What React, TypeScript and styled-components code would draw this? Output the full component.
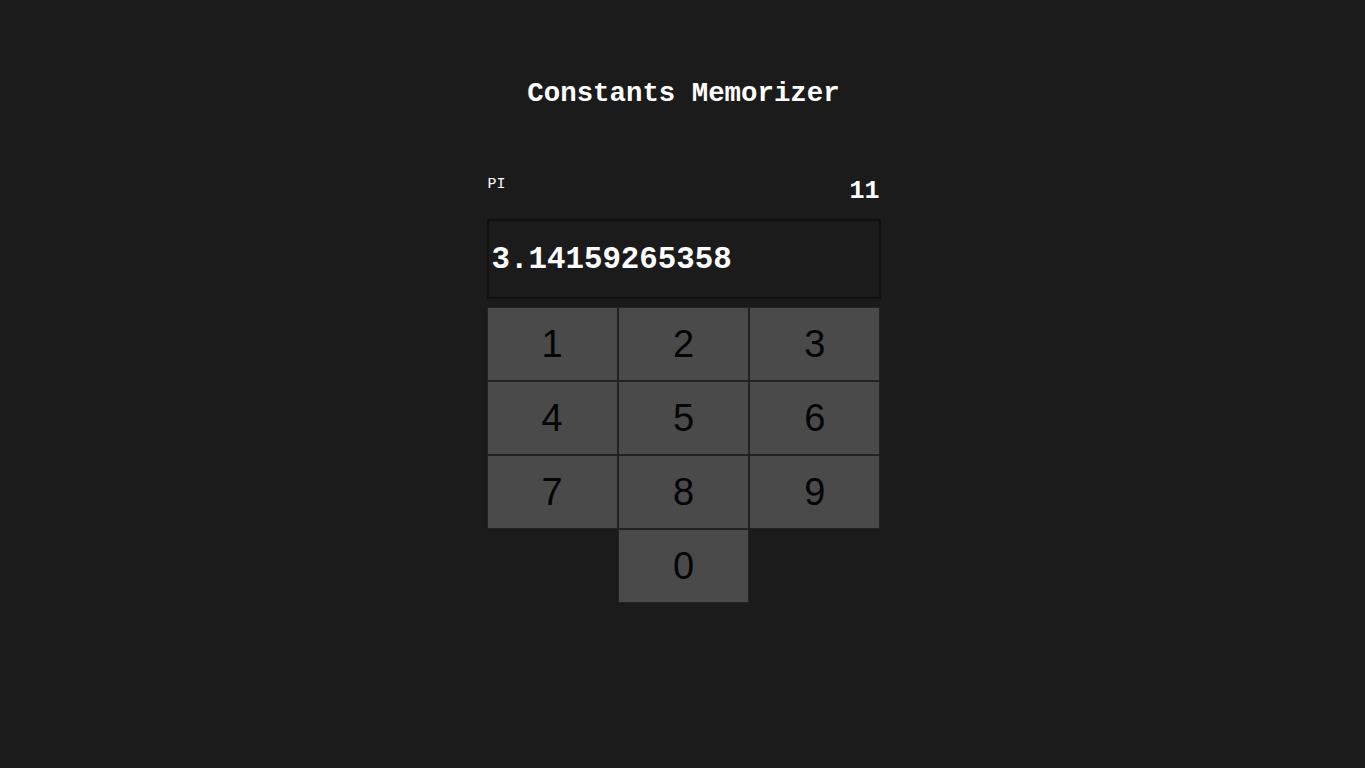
import React from "react";
import styled, { createGlobalStyle } from "styled-components";

const Global = createGlobalStyle`
  html, body { margin: 0; padding: 0; background: #1b1b1b; }
  body { font-family: "Liberation Mono", "Courier New", monospace; color: #fff; }
`;

const Page = styled.div`
  display: flex;
  flex-direction: column;
  align-items: center;
  padding-top: 78px;
  min-height: 768px;
  box-sizing: border-box;
`;

const Title = styled.h1`
  margin: 0 0 0 2px;
  font-family: "Liberation Mono", "Courier New", monospace;
  font-weight: bold;
  font-size: 27.4px;
  line-height: 32px;
  color: #fff;
`;

const Panel = styled.div`
  width: 394px;
  margin-top: 67px;
  margin-left: 2px;
  display: flex;
  flex-direction: column;
`;

const InfoRow = styled.div`
  display: flex;
  justify-content: space-between;
  align-items: flex-start;
  height: 42px;
`;

const Label = styled.span`
  font-size: 15px;
  line-height: 16px;
  margin-left: 1px;
  color: #fff;
`;

const Count = styled.span`
  font-size: 25px;
  font-weight: bold;
  line-height: 30px;
  margin-right: 1px;
`;

const Display = styled.div`
  height: 76px;
  border: 2px solid #111;
  display: flex;
  align-items: center;
  padding: 0 3px;
  font-size: 30.8px;
  font-weight: bold;
  color: #fff;
  margin-bottom: 8px;
`;

const Keypad = styled.div`
  display: grid;
  grid-template-columns: repeat(3, 131.33px);
  grid-auto-rows: 74px;
`;

const Key = styled.button<{ $col?: number }>`
  grid-column: ${(p) => (p.$col ? p.$col : "auto")};
  margin: 0;
  border: 1px solid #222;
  background: #4a4a4a;
  color: #050505;
  font-family: "Liberation Sans", Arial, sans-serif;
  font-size: 38px;
  padding: 0;
  cursor: pointer;
`;

export default function App() {
  const keys = ["1", "2", "3", "4", "5", "6", "7", "8", "9"];
  return (
    <>
      <Global />
      <Page>
        <Title>Constants Memorizer</Title>
        <Panel>
          <InfoRow>
            <Label>PI</Label>
            <Count>11</Count>
          </InfoRow>
          <Display>3.14159265358</Display>
          <Keypad>
            {keys.map((k) => (
              <Key key={k}>{k}</Key>
            ))}
            <Key $col={2}>0</Key>
          </Keypad>
        </Panel>
      </Page>
    </>
  );
}
